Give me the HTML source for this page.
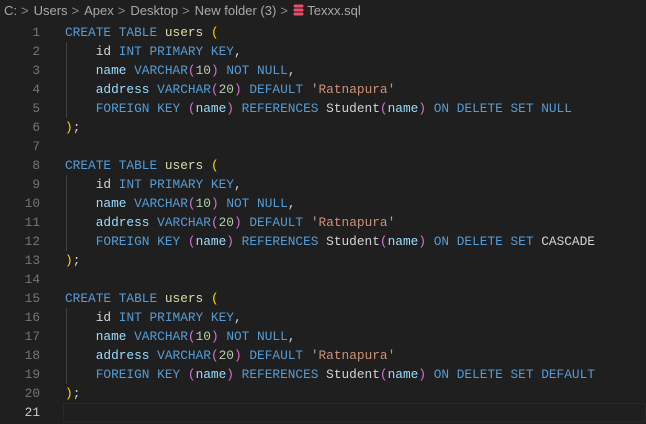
<!DOCTYPE html>
<html><head><style>
body{margin:0;width:646px;height:424px;background:#1f1f1f;overflow:hidden;}
.bc{position:absolute;top:3px;left:4px;font-family:"Liberation Sans",sans-serif;font-size:13px;color:#a9a9a9;white-space:pre;}
.bc .s{color:#8a8a8a;margin:0 5px 0 4px;}
.ln{position:absolute;left:0;width:40px;text-align:right;color:#6e7681;font-family:"Liberation Mono",monospace;font-size:12.8px;line-height:19px;}
.code{position:absolute;left:65px;font-family:"Liberation Mono","DejaVu Sans Mono",monospace;font-size:12.8px;line-height:19px;color:#d4d4d4;white-space:pre;}
.k{color:#569cd6}.f{color:#dcdcaa}.p{color:#ffd700}.q{color:#da70d6}.n{color:#b5cea8}.s2{color:#ce9178}.v{color:#9cdcfe}
.g{position:absolute;left:66px;width:1px;background:#404040;}
.cur{position:absolute;left:63px;right:0;top:403px;height:17px;border:1px solid #282828;}
</style></head><body>
<div class="bc">C:<span class="s">&gt;</span>Users<span class="s">&gt;</span>Apex<span class="s">&gt;</span>Desktop<span class="s">&gt;</span>New folder (3)<span class="s">&gt;</span><svg width="11" height="12" viewBox="0 0 11 12" style="vertical-align:-1px"><g fill="#f14c6c"><rect x="0.5" y="0.5" width="10" height="3" rx="1.5"/><rect x="0.5" y="4.5" width="10" height="3" rx="1.5"/><rect x="0.5" y="8.5" width="10" height="3" rx="1.5"/></g></svg> Texxx.sql</div>
<div class="cur"></div>
<div class="g" style="top:42px;height:76px"></div>
<div class="g" style="top:175px;height:76px"></div>
<div class="g" style="top:308px;height:76px"></div>
<div class="ln" style="top:23px">1<br>2<br>3<br>4<br>5<br>6<br>7<br>8<br>9<br>10<br>11<br>12<br>13<br>14<br>15<br>16<br>17<br>18<br>19<br>20<br><span style="color:#ccc">21</span></div>
<div class="code" style="top:23px"><span class="k">CREATE TABLE</span> <span class="f">users</span> <span class="p">(</span>
    id <span class="k">INT PRIMARY KEY</span>,
    <span class="v">name</span> <span class="k">VARCHAR</span><span class="q">(</span><span class="n">10</span><span class="q">)</span> <span class="k">NOT NULL</span>,
    <span class="v">address</span> <span class="k">VARCHAR</span><span class="q">(</span><span class="n">20</span><span class="q">)</span> <span class="k">DEFAULT</span> <span class="s2">'Ratnapura'</span>
    <span class="k">FOREIGN KEY</span> <span class="q">(</span><span class="v">name</span><span class="q">)</span> <span class="k">REFERENCES</span> Student<span class="q">(</span><span class="v">name</span><span class="q">)</span> <span class="k">ON DELETE SET NULL</span>
<span class="p">)</span>;

<span class="k">CREATE TABLE</span> <span class="f">users</span> <span class="p">(</span>
    id <span class="k">INT PRIMARY KEY</span>,
    <span class="v">name</span> <span class="k">VARCHAR</span><span class="q">(</span><span class="n">10</span><span class="q">)</span> <span class="k">NOT NULL</span>,
    <span class="v">address</span> <span class="k">VARCHAR</span><span class="q">(</span><span class="n">20</span><span class="q">)</span> <span class="k">DEFAULT</span> <span class="s2">'Ratnapura'</span>
    <span class="k">FOREIGN KEY</span> <span class="q">(</span><span class="v">name</span><span class="q">)</span> <span class="k">REFERENCES</span> Student<span class="q">(</span><span class="v">name</span><span class="q">)</span> <span class="k">ON DELETE SET</span> CASCADE
<span class="p">)</span>;

<span class="k">CREATE TABLE</span> <span class="f">users</span> <span class="p">(</span>
    id <span class="k">INT PRIMARY KEY</span>,
    <span class="v">name</span> <span class="k">VARCHAR</span><span class="q">(</span><span class="n">10</span><span class="q">)</span> <span class="k">NOT NULL</span>,
    <span class="v">address</span> <span class="k">VARCHAR</span><span class="q">(</span><span class="n">20</span><span class="q">)</span> <span class="k">DEFAULT</span> <span class="s2">'Ratnapura'</span>
    <span class="k">FOREIGN KEY</span> <span class="q">(</span><span class="v">name</span><span class="q">)</span> <span class="k">REFERENCES</span> Student<span class="q">(</span><span class="v">name</span><span class="q">)</span> <span class="k">ON DELETE SET DEFAULT</span>
<span class="p">)</span>;
</div>
</body></html>
